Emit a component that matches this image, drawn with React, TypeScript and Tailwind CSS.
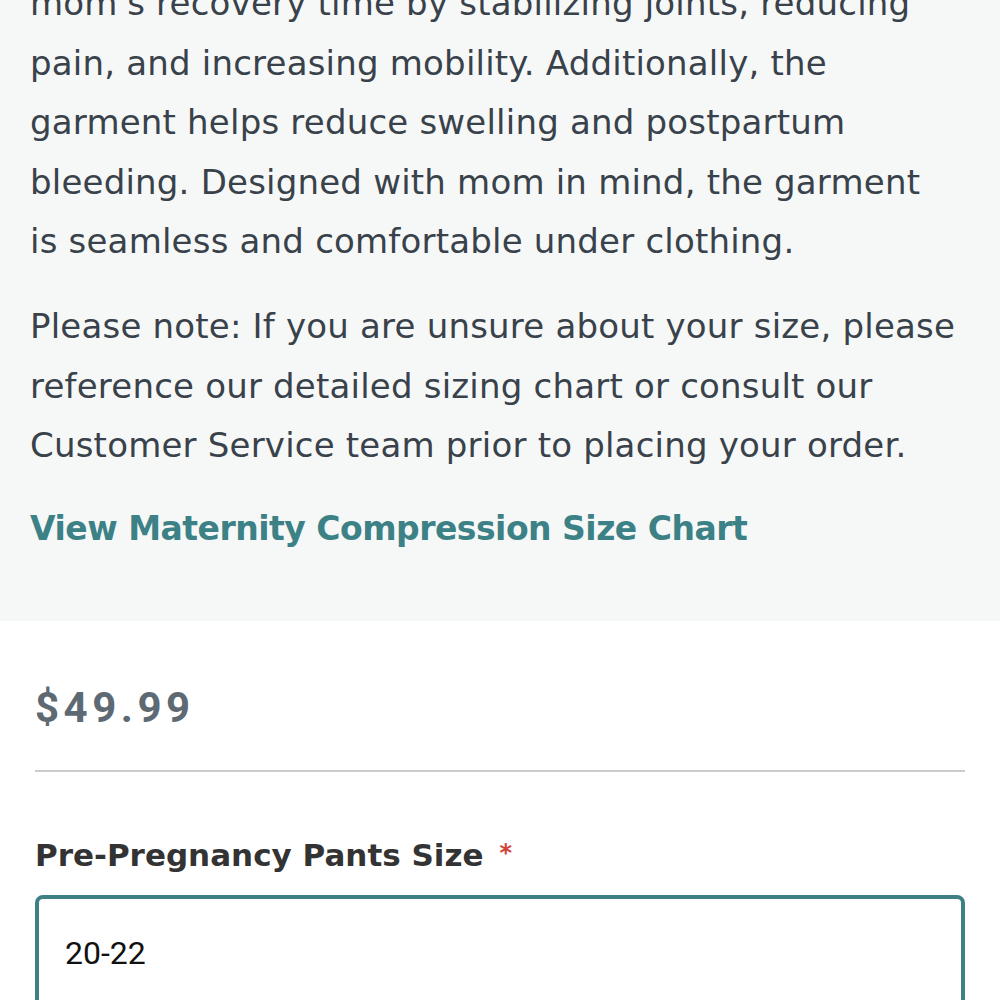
export default function App() {
  return (
    <div className="min-h-screen overflow-hidden bg-white">
      {/* Description */}
      <section className="-mt-[26px] bg-[#f6f8f8] px-[30px] pb-[63px] text-[34px] leading-[59.5px] tracking-[0.2px] text-[#39424a] [font-family:'DejaVu_Sans',sans-serif]">
        <p>
          mom's recovery time by stabilizing joints, reducing
          <br />
          pain, and increasing mobility. Additionally, the
          <br />
          garment helps reduce swelling and postpartum
          <br />
          bleeding. Designed with mom in mind, the garment
          <br />
          is seamless and comfortable under clothing.
        </p>
        <p className="mt-[25.5px]">
          Please note: If you are unsure about your size, please
          <br />
          reference our detailed sizing chart or consult our
          <br />
          Customer Service team prior to placing your order.
        </p>
        <p className="mt-[23px]">
          <a
            href="#size-chart"
            className="text-[33px] font-bold tracking-[-0.5px] text-[#3c8186]"
          >
            View Maternity Compression Size Chart
          </a>
        </p>
      </section>

      {/* Price + options */}
      <section className="px-[35px] pt-[62px]">
        <div className="text-[42px] font-bold leading-[50px] tracking-[4.5px] text-[#5e6a73] [font-family:Roboto,sans-serif]">
          $49.99
        </div>
        <hr className="mt-[37px] border-t-2 border-[#cccccc]" />

        <div className="mt-[60px]">
          <label className="flex items-start text-[31px] font-bold leading-[46px] text-[#333333] [font-family:'DejaVu_Sans',sans-serif]">
            Pre-Pregnancy Pants Size
            <span className="ml-[16px] -mt-[2px] text-[24px] text-[#d0453a]">*</span>
          </label>
          <div className="mt-[17px] h-[140px] rounded-[8px] border-4 border-[#3f8084] px-[26px] pt-[34px] text-[32px] leading-[40px] text-[#111111] [font-family:Roboto,sans-serif]">
            20-22
          </div>
        </div>
      </section>
    </div>
  );
}
